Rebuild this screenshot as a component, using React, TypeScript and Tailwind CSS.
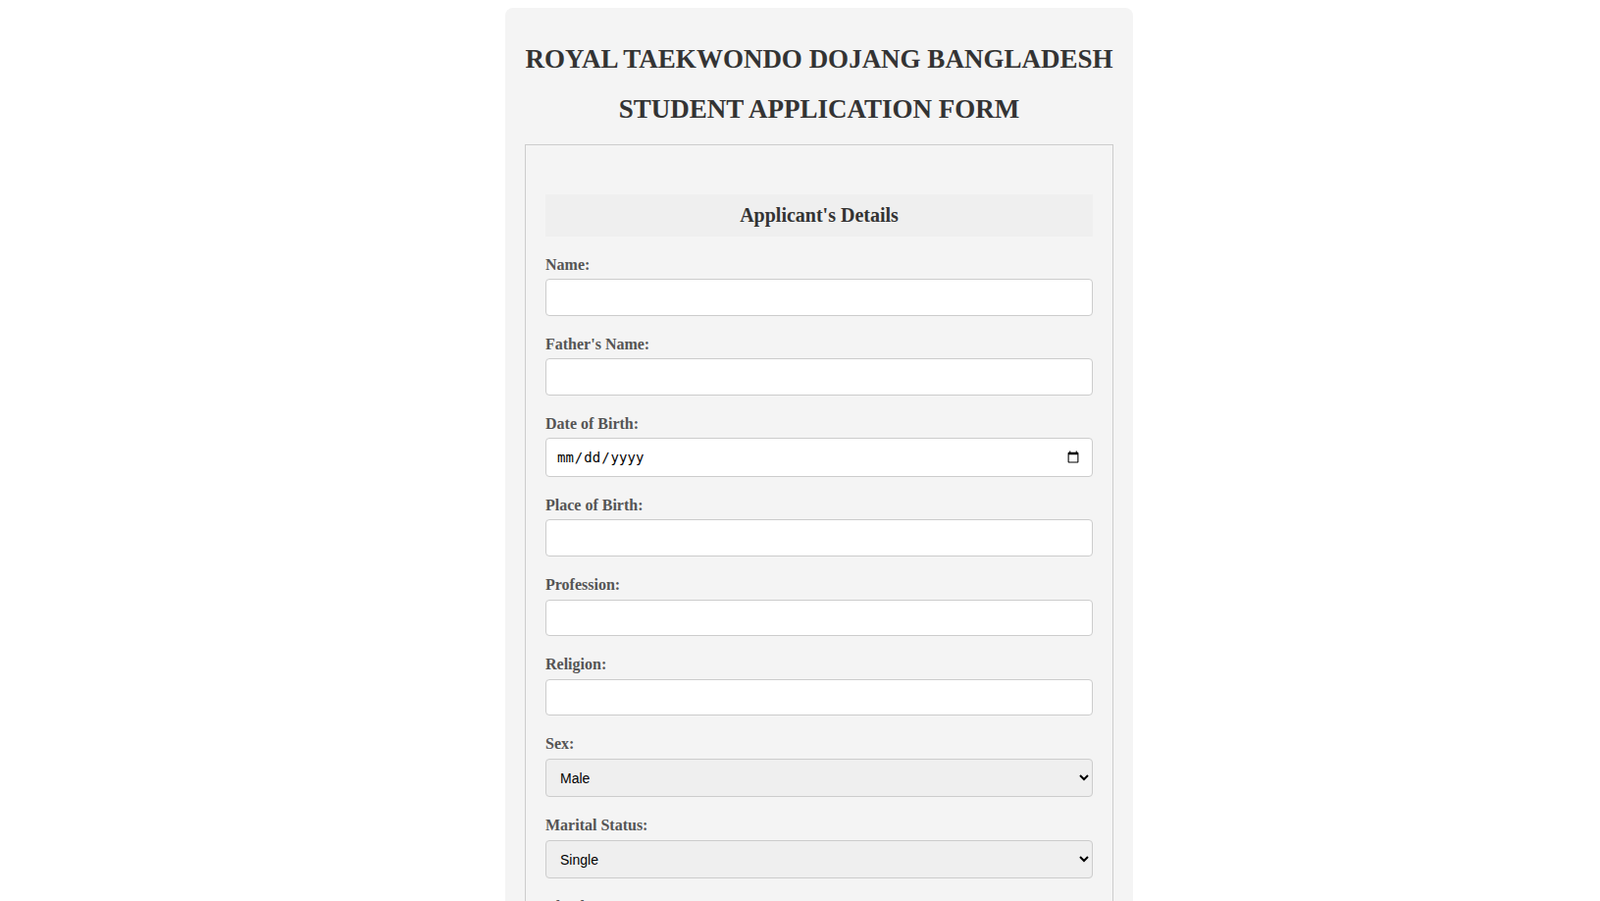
import React from 'react'

const TextField = ({ label, type = 'text' }: { label: string; type?: string }) => {
    return (
        <div className="mb-5">
            <label className="block mb-[5.4px] text-[16px] leading-[normal] font-bold text-[#555]">{label}</label>
            {type === 'date' ? (
                <input
                    type="date"
                    className="block w-full h-[39.7px] px-[10px] bg-white border border-[#ccc] rounded-[4px] font-['DejaVu_Sans_Mono',monospace] text-[14px] text-black"
                />
            ) : (
                <input
                    type={type}
                    className="block w-full h-[37.7px] px-[10px] bg-white border border-[#ccc] rounded-[4px] font-['Liberation_Sans',sans-serif] text-[13.33px] text-black"
                />
            )}
        </div>
    )
}

const SelectField = ({ label, options }: { label: string; options: string[] }) => {
    return (
        <div className="mb-5">
            <label className="block mb-[5.4px] text-[16px] leading-[normal] font-bold text-[#555]">{label}</label>
            <select className="block w-full h-[39.7px] px-[10px] bg-[#efefef] border border-[#ccc] rounded-[4px] font-['Liberation_Sans',sans-serif] text-[14px] text-black">
                {options.map((o) => (
                    <option key={o}>{o}</option>
                ))}
            </select>
        </div>
    )
}

const App = () => {
    return (
        <div className="min-h-screen bg-white font-['Liberation_Serif',serif]">
            <div className="ml-[515px] pt-[8px]">
                <div className="w-[640px] p-5 bg-[#f4f4f4] rounded-lg">
                    <h2 className="mt-[18px] text-center text-[27px] leading-[29.4px] font-bold text-[#333]">
                        ROYAL TAEKWONDO DOJANG BANGLADESH
                    </h2>
                    <h2 className="mt-[22px] mb-[20px] text-center text-[27px] leading-[29.4px] font-bold text-[#333]">
                        STUDENT APPLICATION FORM
                    </h2>

                    <fieldset className="border border-[#ccc] p-5">
                        <div className="mt-[30px] mb-5 py-[10px] bg-[#efefef] text-center text-[20px] leading-[23px] font-bold text-[#333]">
                            Applicant's Details
                        </div>

                        <TextField label="Name:" />
                        <TextField label="Father's Name:" />
                        <TextField label="Date of Birth:" type="date" />
                        <TextField label="Place of Birth:" />
                        <TextField label="Profession:" />
                        <TextField label="Religion:" />
                        <SelectField label="Sex:" options={['Male', 'Female', 'Other']} />
                        <SelectField label="Marital Status:" options={['Single', 'Married']} />
                        <TextField label="Blood Group:" />
                        <TextField label="Nationality:" />
                    </fieldset>
                </div>
            </div>
        </div>
    )
}

export default App
